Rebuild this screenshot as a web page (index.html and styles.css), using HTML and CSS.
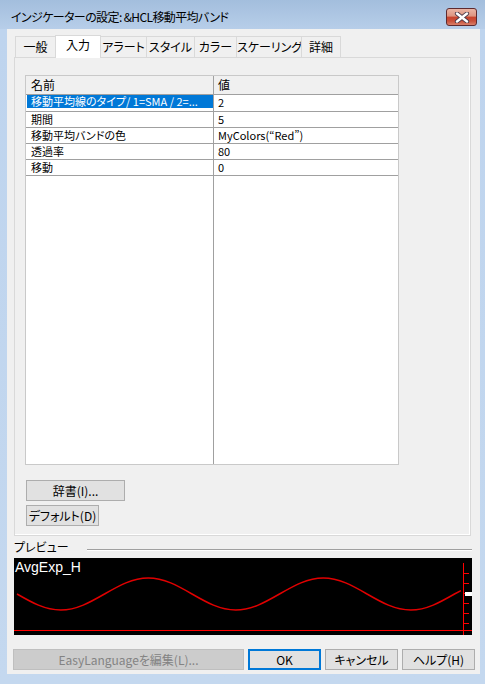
FILE: index.html
```html
<!DOCTYPE html>
<html lang="ja">
<head>
<meta charset="utf-8">
<title>インジケーターの設定</title>
<link rel="stylesheet" href="styles.css">
</head>
<body>
<div class="window">
  <div class="titlebar">
    <div class="title">インジケーターの設定: &amp;HCL移動平均バンド</div>
    <div class="close">
      <svg width="16" height="11" viewBox="0 0 16 11">
        <path d="M3,1.5 L13,9.5 M13,1.5 L3,9.5" stroke="#4a3a4a" stroke-width="4.2" stroke-linecap="round" fill="none"/>
        <path d="M3,1.5 L13,9.5 M13,1.5 L3,9.5" stroke="#ffffff" stroke-width="2.4" stroke-linecap="round" fill="none"/>
      </svg>
    </div>
  </div>
  <div class="client">
    <div class="tabs">
      <div class="tab t1">一般</div>
      <div class="tab t2 active">入力</div>
      <div class="tab t3">アラート</div>
      <div class="tab t4">スタイル</div>
      <div class="tab t5">カラー</div>
      <div class="tab t6">スケーリング</div>
      <div class="tab t7">詳細</div>
    </div>
    <div class="panel">
      <div class="grid">
        <div class="row head"><div class="c1">名前</div><div class="c2">値</div></div>
        <div class="row sel"><div class="c1"><span class="hl">移動平均線のタイプ/ 1=SMA / 2=...</span></div><div class="c2">2</div></div>
        <div class="row"><div class="c1">期間</div><div class="c2">5</div></div>
        <div class="row"><div class="c1">移動平均バンドの色</div><div class="c2">MyColors(“Red”)</div></div>
        <div class="row"><div class="c1">透過率</div><div class="c2">80</div></div>
        <div class="row"><div class="c1">移動</div><div class="c2">0</div></div>
        <div class="filler"></div>
      </div>
      <div class="btn dict">辞書(I)...</div>
      <div class="btn default">デフォルト(D)</div>
    </div>
    <div class="preview-label"><span class="plabel">プレビュー</span><div class="rule"></div></div>
    <div class="preview">
      <svg class="chart" width="458" height="77" viewBox="0 0 458 77">
        <text x="1" y="14" class="chart-title">AvgExp_H</text>
        <path d="M3,36 C17.27,44.2 30.67,52 46.75,52 C62.58,52 76.23,44.2 90.5,36 C104.77,27.8 118.17,20 134.25,20 C150.08,20 163.73,27.8 178,36 C192.27,44.2 205.67,52 221.75,52 C237.58,52 251.23,44.2 265.5,36 C279.77,27.8 293.17,20 309.25,20 C325.08,20 338.73,27.8 353,36 C367.27,44.2 380.67,52 396.75,52 C412.58,52 426.23,44.2 440.5,36 L447,32.6" fill="none" stroke="#e00000" stroke-width="1.5"/>
        <line x1="0" y1="72.5" x2="458" y2="72.5" stroke="#ff0000" stroke-width="1"/>
        <line x1="449.5" y1="5" x2="449.5" y2="77" stroke="#ff0000" stroke-width="1"/>
        <path d="M449,15.5h6M449,25.5h6M449,35.5h6M449,45.5h6M449,55.5h6M449,65.5h6" stroke="#ff0000" stroke-width="1"/>
        <rect x="451" y="34" width="7" height="4" fill="#ffffff"/>
      </svg>
    </div>
    <div class="actions">
      <div class="btn abtn easy">EasyLanguageを編集(L)...</div>
      <div class="btn abtn ok">OK</div>
      <div class="btn abtn">キャンセル</div>
      <div class="btn abtn">ヘルプ(H)</div>
    </div>
  </div>
</div>
</body>
</html>
```
FILE: styles.css
```css
* { box-sizing: border-box; }
body {
  margin: 0;
  font-family: "Noto Sans CJK JP", "Noto Sans", sans-serif;
  font-size: 12px;
  font-feature-settings: "palt" 1;
  color: #000;
}
.window {
  width: 485px;
  height: 684px;
  background: linear-gradient(to bottom, #a3bedd 0, #b7cee9 29px, #bed4ee 29px, #c4d8ef 100%);
  display: flex;
  flex-direction: column;
  overflow: hidden;
}
.titlebar {
  height: 29px;
  display: flex;
  justify-content: space-between;
  align-items: flex-start;
}
.title {
  padding: 9px 0 0 11px;
  line-height: 16px;
  font-size: 12px;
  letter-spacing: -0.6px;
}
.close {
  margin: 8px 8px 0 0;
  width: 31px;
  height: 18px;
  border: 1px solid #5e2a2e;
  border-radius: 3px;
  background: linear-gradient(to bottom, #eab4a4 0%, #dd9480 45%, #c8432c 50%, #c9503a 75%, #d9806a 100%);
  display: flex;
  align-items: center;
  justify-content: center;
}
.close svg { display: block; }
.client {
  margin-left: 7px;
  width: 473px;
  height: 645px;
  background: #f0f0f0;
  padding-top: 6px;
  display: flex;
  flex-direction: column;
}
.tabs {
  display: flex;
  align-items: flex-end;
  height: 22px;
  margin-left: 8px;
}
.tab {
  height: 21px;
  border: 1px solid #d9d9d9;
  border-bottom: none;
  margin-right: -1px;
  line-height: 20px;
  text-align: center;
  background: #f0f0f0;
  white-space: nowrap;
}
.tab.active {
  height: 23px;
  margin-bottom: -1px;
  background: #ffffff;
  line-height: 18px;
  position: relative;
  z-index: 1;
}
.t1 { width: 41px; }
.t2 { width: 46px; }
.t3 { width: 47px; }
.t4 { width: 49px; }
.t5 { width: 43px; }
.t6 { width: 66px; }
.t7 { width: 40px; }
.panel {
  margin-left: 7px;
  width: 457px;
  height: 479px;
  border: 1px solid #d9d9d9;
  box-shadow: inset -1px -1px 0 #ffffff;
  background: #f0f0f0;
  padding: 17px 0 0 10px;
  display: flex;
  flex-direction: column;
  align-items: flex-start;
}
.grid {
  width: 374px;
  height: 390px;
  border: 1px solid #c9c9c9;
  background: #ffffff;
  display: flex;
  flex-direction: column;
  font-size: 11px;
}
.row {
  display: flex;
  height: 16px;
  border-bottom: 1px solid #a0a0a0;
  line-height: 15px;
  white-space: nowrap;
}
.row.head {
  height: 19px;
  background: #f0f0f0;
  line-height: 18px;
  font-size: 12px;
}
.row.sel { height: 17px; }
.c1 {
  width: 188px;
  border-right: 1px solid #a0a0a0;
  padding-left: 5px;
}
.c2 {
  flex: 1;
  padding-left: 4px;
}
.sel .c1 { padding-left: 1px; padding-right: 0; }
.hl {
  display: block;
  height: 13px;
  line-height: 13px;
  background: #0078d7;
  color: #ffffff;
  padding-left: 4px;
}
.filler {
  flex: 1;
  background: linear-gradient(to right, transparent 187px, #a0a0a0 187px, #a0a0a0 188px, transparent 188px);
}
.btn {
  height: 21px;
  border: 1px solid #adadad;
  background: #e1e1e1;
  display: flex;
  align-items: center;
  justify-content: center;
  white-space: nowrap;
}
.dict {
  margin-top: 15px;
  margin-left: 1px;
  width: 99px;
}
.default {
  margin-top: 4px;
  margin-left: 1px;
  width: 73px;
}
.preview-label {
  display: flex;
  height: 22px;
  margin-left: 7px;
  width: 458px;
}
.plabel {
  padding-top: 3px;
  line-height: 16px;
}
.rule {
  flex: 1;
  height: 2px;
  margin: 13px 0 0 18px;
  border-top: 1px solid #a0a0a0;
  border-bottom: 1px solid #ffffff;
}
.preview {
  margin-left: 7px;
  width: 458px;
  height: 77px;
  background: #000000;
}
.chart { display: block; }
.chart-title {
  fill: #ffffff;
  font-family: "Liberation Sans", sans-serif;
  font-size: 14px;
}
.actions {
  display: flex;
  gap: 4px;
  margin: 14px 0 0 6px;
}
.abtn { width: 73px; }
.easy {
  width: 231px;
  background: #cccccc;
  border-color: #bfbfbf;
  color: #838383;
}
.ok {
  border: 2px solid #0078d7;
}
```
